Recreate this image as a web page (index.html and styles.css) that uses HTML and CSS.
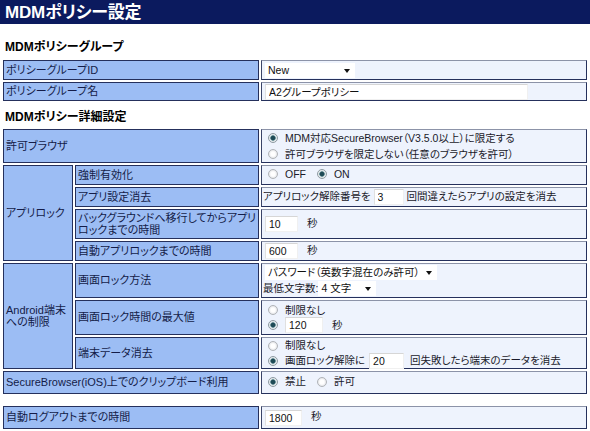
FILE: index.html
```html
<!DOCTYPE html>
<html lang="ja">
<head>
<meta charset="utf-8">
<title>MDMポリシー設定</title>
<link rel="stylesheet" href="styles.css">
</head>
<body>
<div class="titlebar"><h1>MDMポリシー設定</h1></div>

<h2 class="section">MDMポリシーグループ</h2>
<table class="grid">
  <colgroup><col class="c1"><col class="c2"><col></colgroup>
  <tr class="h20">
    <th colspan="2">ポリシーグループID</th>
    <td><span class="dd w90"><select><option>New</option></select></span></td>
  </tr>
  <tr class="h19">
    <th colspan="2">ポリシーグループ名</th>
    <td><input class="txt w263" type="text" value="A2グループポリシー"></td>
  </tr>
</table>

<h2 class="section s2">MDMポリシー詳細設定</h2>
<table class="grid">
  <colgroup><col class="c1"><col class="c2"><col></colgroup>
  <tr class="h32">
    <th colspan="2">許可ブラウザ</th>
    <td>
      <label class="opt tall"><input type="radio" name="browser" checked>MDM対応SecureBrowser（V3.5.0以上）に限定する</label>
      <label class="opt tall"><input type="radio" name="browser">許可ブラウザを限定しない（任意のブラウザを許可）</label>
    </td>
  </tr>
  <tr class="h20">
    <th rowspan="4">アプリロック</th>
    <th>強制有効化</th>
    <td>
      <label class="inl"><input type="radio" name="applock">OFF</label>
      <label class="inl"><input type="radio" name="applock" checked>ON</label>
    </td>
  </tr>
  <tr class="h20">
    <th>アプリ設定消去</th>
    <td class="flush">アプリロック解除番号を <input class="txt w30" type="text" value="3"> 回間違えたらアプリの設定を消去</td>
  </tr>
  <tr class="h30">
    <th class="two">バックグラウンドへ移行してからアプリ<br>ロックまでの時間</th>
    <td><input class="txt w33" type="text" value="10"><span class="unit">秒</span></td>
  </tr>
  <tr class="h20">
    <th>自動アプリロックまでの時間</th>
    <td><input class="txt w33" type="text" value="600"><span class="unit">秒</span></td>
  </tr>
  <tr class="h35">
    <th rowspan="3" class="two">Android端末<br>への制限</th>
    <th>画面ロック方法</th>
    <td class="flush">
      <div class="line"><span class="dd w172 ml"><select><option>パスワード（英数字混在のみ許可）</option></select></span></div>
      <div class="line">最低文字数: <span class="dd w58"><select><option>4 文字</option></select></span></div>
    </td>
  </tr>
  <tr class="h35">
    <th>画面ロック時間の最大値</th>
    <td>
      <label class="opt"><input type="radio" name="maxlock">制限なし</label>
      <label class="opt"><input type="radio" name="maxlock" checked><input class="txt w38" type="text" value="120"><span class="unit">秒</span></label>
    </td>
  </tr>
  <tr class="h29">
    <th>端末データ消去</th>
    <td>
      <label class="opt"><input type="radio" name="wipe">制限なし</label>
      <label class="opt"><input type="radio" name="wipe" checked>画面ロック解除に<input class="txt w35 gap" type="text" value="20">回失敗したら端末のデータを消去</label>
    </td>
  </tr>
  <tr class="h23">
    <th colspan="2">SecureBrowser(iOS)上でのクリップボード利用</th>
    <td>
      <label class="inl"><input type="radio" name="clip" checked>禁止</label>
      <label class="inl"><input type="radio" name="clip">許可</label>
    </td>
  </tr>
</table>

<table class="grid last">
  <colgroup><col class="c1"><col class="c2"><col></colgroup>
  <tr class="h23">
    <th colspan="2">自動ログアウトまでの時間</th>
    <td><input class="txt w37" type="text" value="1800"><span class="unit">秒</span></td>
  </tr>
</table>
</body>
</html>
```

FILE: styles.css
```css
* {
  box-sizing: border-box;
}

body {
  margin: 0;
  background: #ffffff;
  color: #111111;
  font-family: "Liberation Sans", "Noto Sans CJK JP", sans-serif;
  font-size: 11px;
  font-feature-settings: "palt";
}

/* page title bar */
.titlebar {
  height: 24px;
  background: #0b1a5e;
  color: #ffffff;
  padding-left: 5px;
}

.titlebar h1 {
  margin: 0;
  font-size: 17px;
  line-height: 25px;
  font-weight: bold;
  letter-spacing: -0.2px;
}

/* section headings */
.section {
  margin: 15px 0 3px 5px;
  font-size: 12px;
  line-height: 16px;
  font-weight: bold;
  color: #000000;
}

.section.s2 {
  margin-top: 6px;
  margin-bottom: 2px;
}

/* settings tables */
.grid {
  margin-left: 1px;
  width: 588px;
  border-collapse: separate;
  border-spacing: 2px;
  table-layout: fixed;
}

.grid.last {
  margin-top: 8px;
}

.c1 {
  width: 70px;
}

.c2 {
  width: 184px;
}

.grid th,
.grid td {
  border: 1px solid #25305c;
  vertical-align: middle;
  text-align: left;
  font-weight: normal;
  line-height: 15px;
  padding: 0 2px;
  white-space: nowrap;
}

.grid th {
  background: #9cbdf4;
  color: #141c48;
}

.grid th.two {
  line-height: 12px;
}

.grid td {
  background: #eef3fd;
  border-top-color: #8c93a8;
  border-left-color: #3a4468;
  padding-left: 3px;
  color: #1a1a2a;
  font-size: 10.5px;
}

.grid td.flush {
  padding-left: 1px;
}

.h19 { height: 19px; }
.h20 { height: 20px; }
.h23 { height: 23px; }
.h29 { height: 29px; }
.h30 { height: 30px; }
.h32 { height: 32px; }
.h35 { height: 35px; }

/* option rows */
.opt {
  display: flex;
  align-items: center;
  height: 15px;
}

.opt.tall {
  height: 16px;
}

.inl {
  display: inline-flex;
  align-items: center;
  margin-right: 5px;
}

.line {
  display: flex;
  align-items: center;
  height: 16px;
}

/* radio buttons */
input[type="radio"] {
  appearance: none;
  -webkit-appearance: none;
  width: 10px;
  height: 10px;
  margin: 0 7px 0 3px;
  border-radius: 50%;
  border: 1px solid #b0b3b8;
  background: radial-gradient(circle, #ffffff 0 2px, #e6e7ea 4px);
  flex: none;
}

input[type="radio"]:checked {
  border-color: #8d9aa2;
  background: radial-gradient(circle, #1e4a56 0 1.8px, #4f7c86 2.4px, #d9e3e6 3px, #eef0f2 4px);
}

/* text boxes */
.txt {
  height: 16px;
  padding: 0 3px;
  border: 1px solid #f0f0f0;
  border-top-color: #d6d6d6;
  border-left-color: #e0e0e0;
  background: #ffffff;
  font: inherit;
  color: #111111;
  vertical-align: middle;
}

.txt.gap {
  margin: 0 6px 0 4px;
}

.w30 { width: 30px; }
.w33 { width: 33px; }
.w35 { width: 35px; }
.w37 { width: 37px; }
.w38 { width: 38px; }
.w263 { width: 263px; }

.unit {
  margin-left: 9px;
}

/* drop-down lists */
.dd {
  position: relative;
  display: inline-block;
  height: 15px;
  vertical-align: middle;
}

.dd.ml {
  margin-left: 2px;
}

.dd select {
  appearance: none;
  -webkit-appearance: none;
  width: 100%;
  height: 15px;
  border: none;
  background: #ffffff;
  padding: 0 0 0 3px;
  font: inherit;
  line-height: 15px;
  color: #111111;
}

.dd::after {
  content: "";
  position: absolute;
  right: 5px;
  top: 6px;
  border-left: 3px solid transparent;
  border-right: 3px solid transparent;
  border-top: 4px solid #111111;
}

.w58 { width: 58px; }
.w90 { width: 90px; }
.w172 { width: 172px; }
```
